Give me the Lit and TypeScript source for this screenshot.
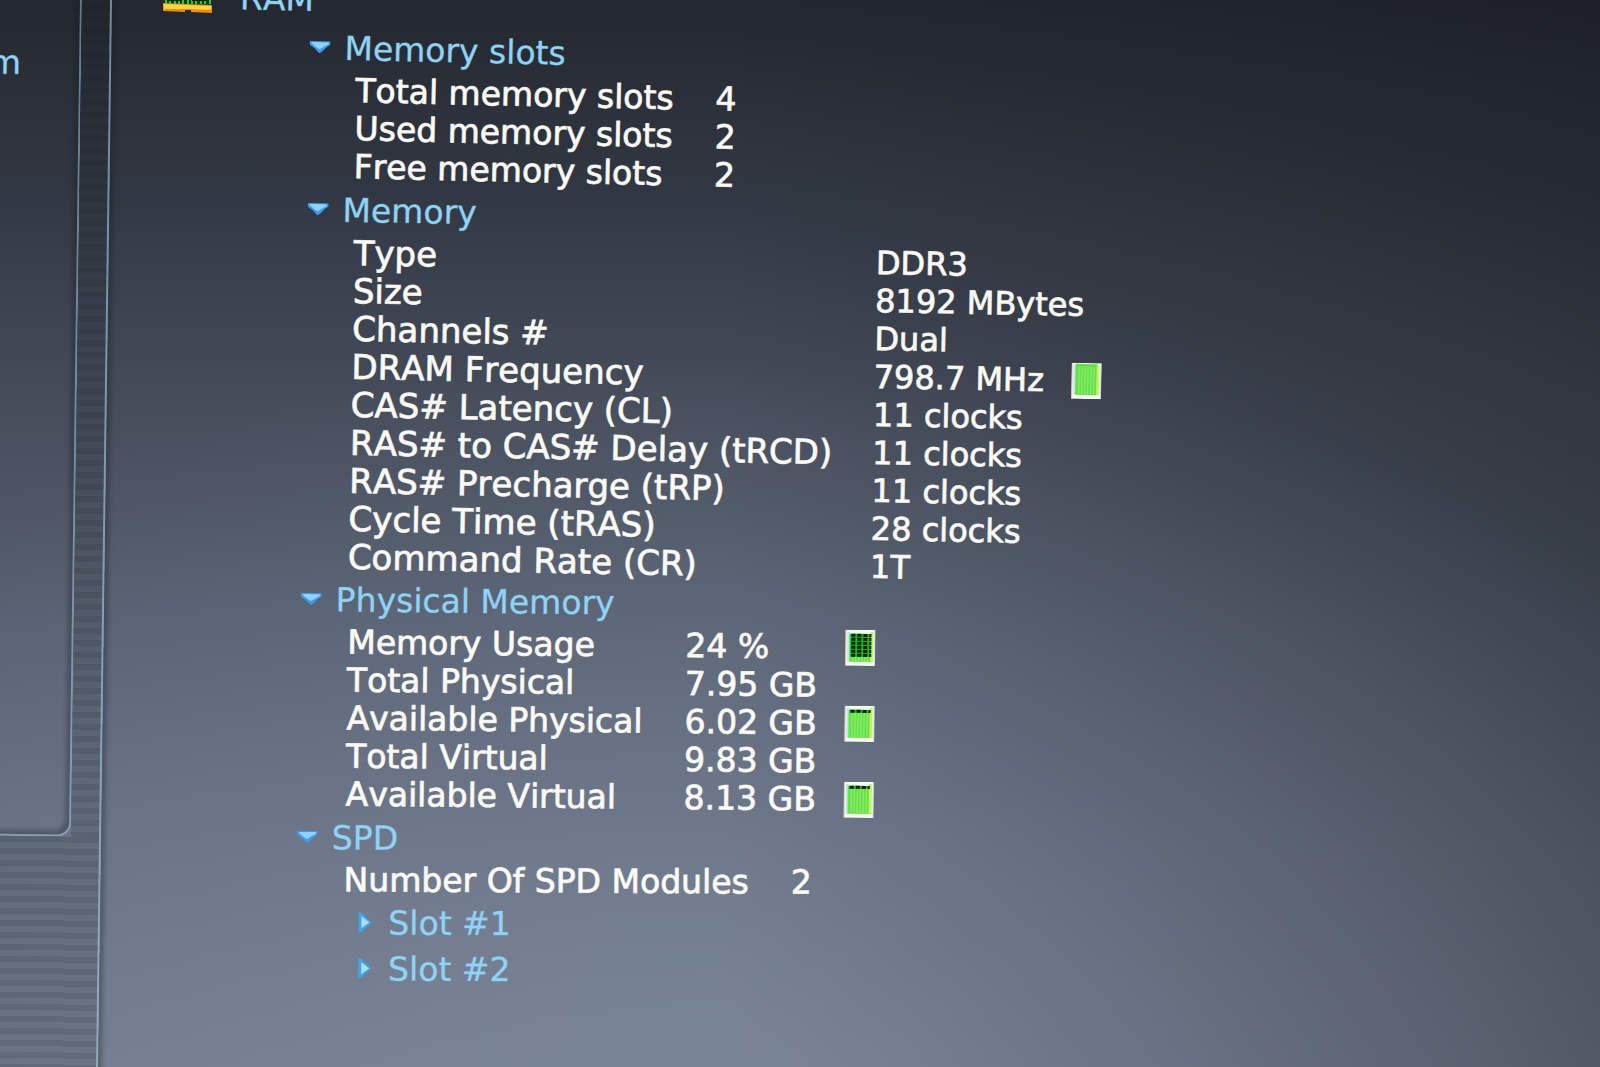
import { LitElement, html, css, svg, nothing } from "lit";
import { customElement, property, state } from "lit/decorators.js";
import { classMap } from "lit/directives/class-map.js";

interface Row {
  label: string;
  value: string;
  meter?: number;
}

interface Section {
  id: string;
  title: string;
  rows: Row[];
  meterColumn?: boolean;
  children?: string[];
}

const SECTIONS: Section[] = [
  {
    id: "slots",
    title: "Memory slots",
    rows: [
      { label: "Total memory slots", value: "4" },
      { label: "Used memory slots", value: "2" },
      { label: "Free memory slots", value: "2" },
    ],
  },
  {
    id: "memory",
    title: "Memory",
    rows: [
      { label: "Type", value: "DDR3" },
      { label: "Size", value: "8192 MBytes" },
      { label: "Channels #", value: "Dual" },
      { label: "DRAM Frequency", value: "798.7 MHz", meter: 8 },
      { label: "CAS# Latency (CL)", value: "11 clocks" },
      { label: "RAS# to CAS# Delay (tRCD)", value: "11 clocks" },
      { label: "RAS# Precharge (tRP)", value: "11 clocks" },
      { label: "Cycle Time (tRAS)", value: "28 clocks" },
      { label: "Command Rate (CR)", value: "1T" },
    ],
  },
  {
    id: "physical",
    title: "Physical Memory",
    meterColumn: true,
    rows: [
      { label: "Memory Usage", value: "24 %", meter: 2 },
      { label: "Total Physical", value: "7.95 GB" },
      { label: "Available Physical", value: "6.02 GB", meter: 7 },
      { label: "Total Virtual", value: "9.83 GB" },
      { label: "Available Virtual", value: "8.13 GB", meter: 7 },
    ],
  },
  {
    id: "spd",
    title: "SPD",
    rows: [{ label: "Number Of SPD Modules", value: "2" }],
    children: ["Slot #1", "Slot #2"],
  },
];

/* Small bar indicator: the dark cells at the top are the unfilled part. */
@customElement("level-meter")
class LevelMeter extends LitElement {
  @property({ type: Number }) level = 8;

  static styles = css`
    :host {
      display: block;
      width: 30px;
      height: 36px;
    }
    svg {
      display: block;
    }
  `;

  render() {
    const full = this.level === 8;
    const darkRows = full ? 0 : this.level === 7 ? 1 : 6;
    const cells = [];
    for (let row = 0; row < darkRows; row++) {
      const y = 4 + row * 4;
      for (const x of [6, 12, 18]) {
        cells.push(svg`<rect x=${x} y=${y} width="4" height="3" fill="#04250a" />`);
      }
      cells.push(svg`<rect x="24" y=${y} width="2" height="3" fill="#3c2205" />`);
    }
    return html`<svg width="30" height="36" viewBox="0 0 30 36" aria-hidden="true">
      <rect width="30" height="36" fill="#f4fbf0" />
      <rect width="1" height="36" fill="#f3b7a0" />
      <rect x="29" width="1" height="36" fill="#a9d8fb" />
      <rect x="2" y="2" width="3" height="30" fill="#b5ecf0" />
      <rect x="4" y=${full ? 1 : 4} width="22" height=${full ? 31 : 28} fill="#66e046" />
      <rect x="25" y="2" width="3" height="30" fill="#c9f25a" />
      ${[7, 10, 13, 16, 19, 22].map(
        (x) => svg`<rect x=${x} y="4" width="1" height="28" fill="#93ef78" />`
      )}
      ${darkRows
        ? svg`<rect x="5" y="4" width="21" height=${darkRows * 4 - 1} fill="#1fae2c" />`
        : nothing}
      ${cells}
    </svg>`;
  }
}

@customElement("app-root")
class AppRoot extends LitElement {
  @state() private closed = new Set<string>(["Slot #1", "Slot #2"]);

  static styles = css`
    :host {
      display: block;
      font-family: "DejaVu Sans", Verdana, sans-serif;
      font-size: 33px;
      font-kerning: none;
      color: #fbfaf5;
    }
    .window {
      box-sizing: border-box;
      height: 100vh;
      display: flex;
      overflow: hidden;
      background:
        radial-gradient(ellipse 80% 75% at 46% 108%, rgba(140, 154, 176, 0.42), rgba(140, 154, 176, 0) 100%),
        linear-gradient(90deg, rgba(20, 22, 26, 0) 45%, rgba(20, 22, 26, 0.42) 100%),
        linear-gradient(180deg, #23272f 0%, #323843 18%, #464d5b 38%, #586171 60%, #666f80 80%, #707889 100%);
    }
    .side {
      flex: none;
      box-sizing: border-box;
      width: 125px;
      margin: -8px 0 -8px -20px;
      display: flex;
      flex-direction: column;
      border-right: 2px solid rgba(160, 190, 215, 0.65);
      box-shadow: 4px 0 4px rgba(20, 24, 32, 0.3);
      transform: rotate(0.75deg);
      transform-origin: 100% 50%;
    }
    .upper {
      flex: 0 0 78%;
      display: flex;
    }
    .panel {
      flex: 1;
      display: flex;
      justify-content: flex-end;
      box-sizing: border-box;
      padding: 48px 58px 0 0;
      border-right: 2px solid rgba(160, 190, 215, 0.55);
      border-bottom: 2px solid rgba(160, 190, 215, 0.55);
      border-bottom-right-radius: 14px;
      box-shadow: inset -4px -4px 4px rgba(20, 24, 32, 0.3);
      color: #8fd3f8;
      line-height: 48px;
    }
    .gutter {
      width: 28px;
    }
    .lower {
      flex: 1;
    }
    .gutter,
    .lower {
      background: repeating-linear-gradient(180deg, rgba(18, 24, 26, 0.2) 0 6px, rgba(18, 24, 26, 0.1) 6px 12px);
    }
    .content {
      flex: 1;
      min-width: 0;
      padding-left: 58px;
    }
    .ram {
      height: 23px;
      display: flex;
      align-items: flex-end;
      gap: 27px;
    }
    .ram svg {
      flex: none;
      margin-bottom: 10px;
    }
    .ram h1 {
      line-height: 40px;
      margin-bottom: 4px;
      color: #8fd3f8;
      transform: rotate(1.3deg);
    }
    .section {
      width: max-content;
      transform-origin: 0 0;
    }
    .slots {
      margin-left: 147px;
      transform: rotate(1.3deg);
    }
    .memory {
      margin-left: 145px;
      transform: rotate(1.1deg);
    }
    .physical {
      margin-left: 138px;
      transform: rotate(0.6deg);
    }
    .spd {
      margin-left: 134px;
      transform: rotate(0.3deg);
    }
    h1,
    h2,
    h3 {
      margin: 0;
      font-size: 33px;
      font-weight: 400;
    }
    button,
    h1,
    .panel {
      -webkit-text-stroke: 1px rgba(143, 211, 248, 0.35);
    }
    button {
      display: flex;
      align-items: center;
      gap: 14px;
      height: 48px;
      padding: 0;
      border: 0;
      background: none;
      color: #8fd3f8;
      font: inherit;
      font-kerning: none;
      white-space: nowrap;
      cursor: pointer;
    }
    h3 button {
      height: 46px;
      gap: 17px;
      margin-left: 62px;
    }
    table {
      margin-left: 47px;
      border-collapse: collapse;
    }
    th,
    td {
      height: 38px;
      padding: 0;
      line-height: 38px;
      font-weight: 400;
      text-align: left;
      white-space: nowrap;
      -webkit-text-stroke: 1px rgba(251, 250, 245, 0.8);
    }
    td {
      padding-left: 42px;
    }
    .memory th {
      font-size: 34px;
    }
    .memory td {
      padding-left: 40px;
      font-size: 32px;
    }
    .physical .meter {
      padding-left: 28px;
    }
    .inline {
      display: flex;
      align-items: center;
      gap: 27px;
      height: 38px;
    }
  `;

  private toggle(id: string) {
    const next = new Set(this.closed);
    if (next.has(id)) {
      next.delete(id);
    } else {
      next.add(id);
    }
    this.closed = next;
  }

  private arrow(open: boolean) {
    return open
      ? html`<svg width="21" height="14" viewBox="0 0 21 14" aria-hidden="true">
          <path d="M0 1H21V4L18 6L15 9L12 12L10 13L8 11L5 8L2 6L0 4Z" fill="#3f9bf0" />
          <path d="M2 2H19V4L15 6L12 8L10 9L7 7L3 4Z" fill="#8fd2ff" />
        </svg>`
      : html`<svg width="13" height="20" viewBox="0 0 13 20" aria-hidden="true">
          <path d="M0 0H3L6 4L10 7L13 10L10 13L6 16L3 20H0Z" fill="#3fa6ee" />
          <path d="M3 4L7 7L11 10L7 13L3 16Z" fill="#a5e2ff" />
        </svg>`;
  }

  private heading(id: string, title: string) {
    const open = !this.closed.has(id);
    return html`<button aria-expanded=${open ? "true" : "false"} @click=${() => this.toggle(id)}>
      ${this.arrow(open)}<span>${title}</span>
    </button>`;
  }

  private row(r: Row, meterColumn: boolean) {
    const meter = r.meter ? html`<level-meter .level=${r.meter}></level-meter>` : nothing;
    if (meterColumn) {
      return html`<tr>
        <th scope="row">${r.label}</th>
        <td>${r.value}</td>
        <td class="meter">${meter}</td>
      </tr>`;
    }
    return html`<tr>
      <th scope="row">${r.label}</th>
      <td><div class="inline">${r.value}${meter}</div></td>
    </tr>`;
  }

  private section(s: Section) {
    return html`<section class=${classMap({ section: true, [s.id]: true })}>
      <h2>${this.heading(s.id, s.title)}</h2>
      ${this.closed.has(s.id)
        ? nothing
        : html`<table>
              <tbody>
                ${s.rows.map((r) => this.row(r, !!s.meterColumn))}
              </tbody>
            </table>
            ${(s.children ?? []).map((c) => html`<h3>${this.heading(c, c)}</h3>`)}`}
    </section>`;
  }

  render() {
    return html`<div class="window">
      <aside class="side">
        <div class="upper">
          <div class="panel">m</div>
          <div class="gutter"></div>
        </div>
        <div class="lower"></div>
      </aside>
      <main class="content">
        <div class="ram">
          <svg width="50" height="32" viewBox="0 0 50 32" aria-hidden="true">
            <rect x="1" y="0" width="48" height="24" fill="#0b3a0e" />
            <path
              d="M3 0V23M7 0V23M12 0V23M16 0V23M20 0V23M25 0V23M29 0V23M33 0V23M38 0V23M42 0V23M47 0V23"
              stroke="#35c534"
              stroke-width="2"
            />
            <rect x="5" y="12" width="14" height="8" fill="#062208" />
            <rect x="29" y="12" width="14" height="8" fill="#062208" />
            <path d="M0 22L49 24V32L28 31V29H22V31L0 30Z" fill="#f08a1c" />
            <path d="M1 23L48 25V29L28 28H22L1 28Z" fill="#ffd83a" />
          </svg>
          <h1>RAM</h1>
        </div>
        ${SECTIONS.map((s) => this.section(s))}
      </main>
    </div>`;
  }
}
